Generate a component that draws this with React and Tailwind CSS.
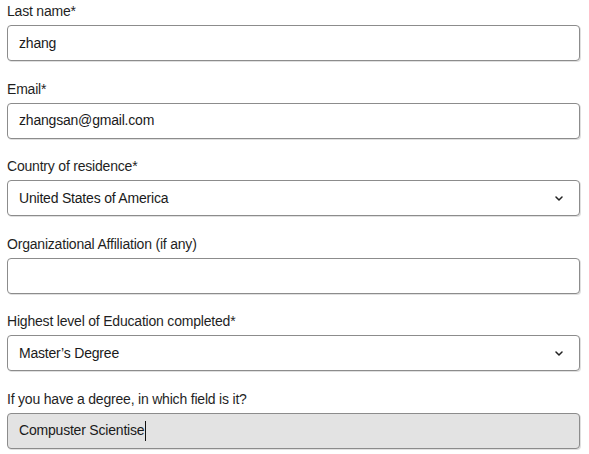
import React from "react";

function Chevron() {
  return (
    <svg width="8" height="5" viewBox="0 0 8 5" className="shrink-0">
      <path d="M1 1l3 3 3-3" fill="none" stroke="#222" strokeWidth="1.5" strokeLinecap="round" strokeLinejoin="round" />
    </svg>
  );
}

function Field({ label, value, select, filled, cursor }) {
  return (
    <div className="flex flex-col gap-[4px]">
      <div className="h-[20px] leading-[20px] text-[14px] tracking-[-0.2px] text-[#1f1f1f]">{label}</div>
      <div
        className={
          "h-[36px] rounded-[4px] border border-[#8c8c8c] shadow-[1px_1px_0_0_rgba(0,0,0,0.12)] flex items-center pl-[11px] pr-[16px] text-[14px] tracking-[-0.2px] text-[#1a1a1a] " +
          (filled ? "bg-[#e3e3e3]" : "bg-white")
        }
      >
        <span className="flex-1 flex items-center">
          {value}
          {cursor && <span className="inline-block w-px h-[20px] bg-[#111] ml-[1px]" />}
        </span>
        {select && <Chevron />}
      </div>
    </div>
  );
}

export default function App() {
  return (
    <div
      className="w-[589px] h-[454px] bg-white overflow-hidden pl-[7px] pr-[9px] pt-[1px] flex flex-col gap-[17.5px]"
      style={{ fontFamily: '"Liberation Sans", Arial, sans-serif' }}
    >
      <Field label="Last name*" value="zhang" />
      <Field label="Email*" value="zhangsan@gmail.com" />
      <Field label="Country of residence*" value="United States of America" select />
      <Field label="Organizational Affiliation (if any)" value="" />
      <Field label="Highest level of Education completed*" value="Master’s Degree" select />
      <Field label="If you have a degree, in which field is it?" value="Compuster Scientise" filled cursor />
    </div>
  );
}
